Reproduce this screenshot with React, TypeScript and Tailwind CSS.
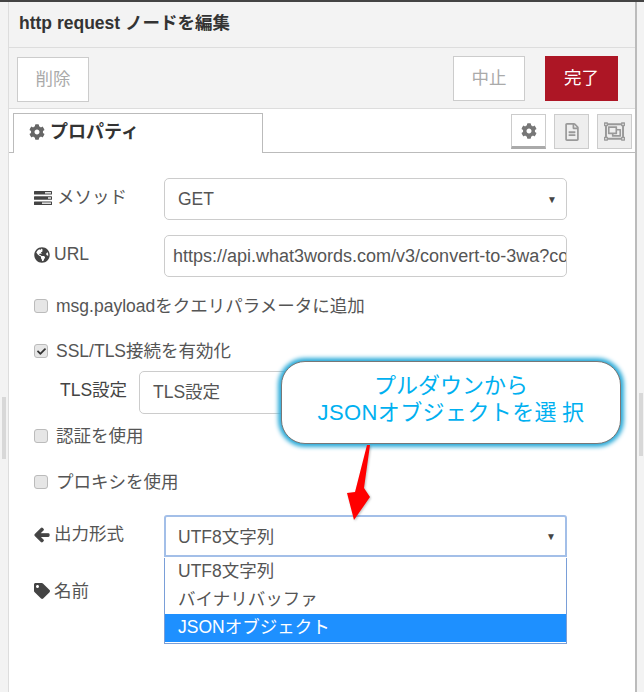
import React from "react";
import { FaCog, FaGlobeAmericas, FaArrowLeft, FaTag, FaRegFileAlt, FaRegObjectGroup, FaCheck } from "react-icons/fa";

const font = "font-['Liberation_Sans','Noto_Sans_CJK_JP',sans-serif]";

function Check({ checked }: { checked?: boolean }) {
  return (
    <span className="w-[14px] h-[14px] mr-[8px] rounded-[3px] border border-[#bbb] bg-[#e6e6e6] flex items-center justify-center shrink-0">
      {checked && <FaCheck className="text-[#333] text-[9px]" />}
    </span>
  );
}

function CheckRow({ label, checked, className }: { label: string; checked?: boolean; className: string }) {
  return (
    <div className={`flex items-center h-[24px] pl-[25px] text-[17.5px] text-[#555] ${className}`}>
      <Check checked={checked} />
      <span>{label}</span>
    </div>
  );
}

function TasksIcon() {
  return (
    <svg className="mr-[5px] shrink-0" width="18" height="14" viewBox="0 0 18 14">
      <rect x="0" y="0" width="18" height="3.6" rx="0.6" fill="#444" />
      <rect x="11" y="1" width="6" height="1.6" fill="#ddd" />
      <rect x="0" y="5.2" width="18" height="3.6" rx="0.6" fill="#444" />
      <rect x="14" y="6.2" width="3" height="1.6" fill="#ddd" />
      <rect x="0" y="10.4" width="18" height="3.6" rx="0.6" fill="#444" />
      <rect x="8" y="11.4" width="9" height="1.6" fill="#ddd" />
    </svg>
  );
}

export default function App() {
  return (
    <div className={`relative w-[644px] h-[692px] overflow-hidden bg-[#f3f3f3] ${font}`}>
      <div className="h-[2px] bg-[#444]" />
      <div className="flex h-[690px]">
        <div className="w-[8px] flex flex-col items-center pt-[395px]">
          <div className="w-[4px] h-[62px] bg-[#d8d8d8]" />
        </div>
        <div className="w-[629px] border-l border-r-2 border-l-[#ddd] border-r-[#bbb] bg-white flex flex-col">
          <div className="h-[46px] shrink-0 bg-[#f3f3f3] border-b border-[#ddd] pl-[10px] pt-[9px] text-[17.5px] leading-[24px] font-bold text-[#333]">
            http request ノードを編集
          </div>
          <div className="h-[61px] shrink-0 bg-[#f3f3f3] border-b border-[#ddd] flex pl-[8px] pr-[17px] pt-[8px]">
            <button className="w-[72px] h-[45px] mt-px bg-white border border-[#ccc] text-[#aaa] text-[17.5px]">削除</button>
            <div className="flex-1" />
            <button className="w-[72px] h-[45px] bg-white border border-[#ccc] text-[#aaa] text-[17.5px]">中止</button>
            <button className="w-[73px] h-[45px] ml-[20px] bg-[#ad1625] text-white text-[17.5px]">完了</button>
          </div>
          <div className="h-[44px] shrink-0 border-b-[1.5px] border-[#bbb] flex pt-[4px] relative">
            <div className="ml-[4px] w-[250px] h-[40px] border border-b-0 border-[#bbb] bg-white flex items-center pl-[15px] pb-[3px] text-[18px] font-bold text-[#333] relative z-10 mb-[-2px]">
              <FaCog className="text-[#666] text-[16px] mr-[5px]" />
              プロパティ
            </div>
            <div className="flex-1" />
            <div className="flex gap-[8px] mr-[3px] mt-px">
              <div className="w-[35px] h-[35px] border border-[#ccc] border-b-[3px] border-b-[#aaa] bg-white flex items-center justify-center text-[#777] text-[16px]"><FaCog /></div>
              <div className="w-[35px] h-[35px] border border-[#ccc] bg-[#eee] flex items-center justify-center text-[#999] text-[18px]"><FaRegFileAlt /></div>
              <div className="w-[35px] h-[35px] border border-[#ccc] bg-[#eee] flex items-center justify-center text-[#999] text-[21px]"><FaRegObjectGroup /></div>
            </div>
          </div>
          <div className="flex-1 bg-white text-[#555] relative">
            <div className="flex items-center mt-[25px] pl-[25px] h-[42px]">
              <span className="w-[130px] flex items-center text-[17.5px] -mt-[3px]">
                <TasksIcon />メソッド
              </span>
              <div className="w-[403px] h-[42px] border border-[#ccc] rounded-[5px] flex items-center justify-between pl-[13px] pr-[9px] text-[17.5px]">
                GET<span className="text-[10px] text-[#444]">▼</span>
              </div>
            </div>
            <div className="flex items-center mt-[15px] pl-[25px] h-[42px]">
              <span className="w-[130px] flex items-center text-[17.5px] -mt-[3px]">
                <FaGlobeAmericas className="text-[#444] text-[16px] mr-[4px]" />URL
              </span>
              <div className="w-[403px] h-[42px] border border-[#ccc] rounded-[5px] flex items-center pl-[8px] text-[18px] overflow-hidden whitespace-nowrap">
                https://api.what3words.com/v3/convert-to-3wa?coo
              </div>
            </div>
            <CheckRow label="msg.payloadをクエリパラメータに追加" className="mt-[17px]" />
            <CheckRow label="SSL/TLS接続を有効化" checked className="mt-[21px]" />
            <div className="flex items-center mt-[8px] pl-[51px] h-[43px]">
              <span className="w-[79px] text-[17.5px] -mt-[4px] text-[#444]">TLS設定</span>
              <div className="w-[200px] h-[43px] border border-[#ccc] rounded-[5px] flex items-center pl-[13px] text-[17.5px]">TLS設定</div>
            </div>
            <CheckRow label="認証を使用" className="mt-[10px]" />
            <CheckRow label="プロキシを使用" className="mt-[22px]" />
            <div className="flex items-center mt-[21px] pl-[25px] h-[42px]">
              <span className="w-[130px] flex items-center text-[17.5px] -mt-[3px]">
                <FaArrowLeft className="text-[#444] text-[16px] mr-[4px]" stroke="#444" strokeWidth={40} />出力形式
              </span>
              <div className="w-[403px] h-[42px] border-2 border-[#a3bfe8] rounded-t-[3px] flex items-center justify-between pl-[12px] pr-[9px] text-[17.5px]">
                <span className="pt-[3px]">UTF8文字列</span><span className="text-[10px] text-[#444]">▼</span>
              </div>
            </div>
            <div className="flex items-center mt-[22px] pl-[25px] h-[24px]">
              <span className="flex items-center text-[17.5px]">
                <FaTag className="text-[#444] text-[16px] mr-[4px]" />名前
              </span>
            </div>
            <div className="absolute left-[155px] top-[405px] w-[403px] h-[86px] border border-t-0 border-[#7a9fd8] bg-white text-[17.5px] leading-[26px]">
              <div className="pl-[13px] h-[28px]">UTF8文字列</div>
              <div className="pl-[13px] h-[28px]">バイナリバッファ</div>
              <div className="pl-[13px] h-[28px] bg-[#1e90ff] text-white">JSONオブジェクト</div>
            </div>
          </div>
        </div>
        <div className="w-[7px] flex flex-col items-center pt-[391px]">
          <div className="w-[4px] h-[63px] bg-[#d8d8d8]" />
        </div>
      </div>

      <div className="absolute left-[281px] top-[361px] w-[340px] h-[83px] bg-white rounded-[24px] border border-[#777] shadow-[0_0_4px_3px_#2aaad8] flex flex-col items-center pt-[10px] text-[#00b0f0] text-[22px] leading-[27px] whitespace-nowrap">
        <span>プルダウンから</span>
        <span className="tracking-[0.4px]">JSONオブジェクトを選<span className="ml-[5px]">択</span></span>
      </div>
      <svg className="absolute left-[340px] top-[440px]" width="40" height="85" viewBox="0 0 40 85">
        <polygon points="27,5 30,5 24,48 30,57 14,80 7,53 15,52" fill="#ff0000" style={{ filter: "drop-shadow(1px 1px 1px rgba(0,0,0,0.25))" }} />
      </svg>
    </div>
  );
}
